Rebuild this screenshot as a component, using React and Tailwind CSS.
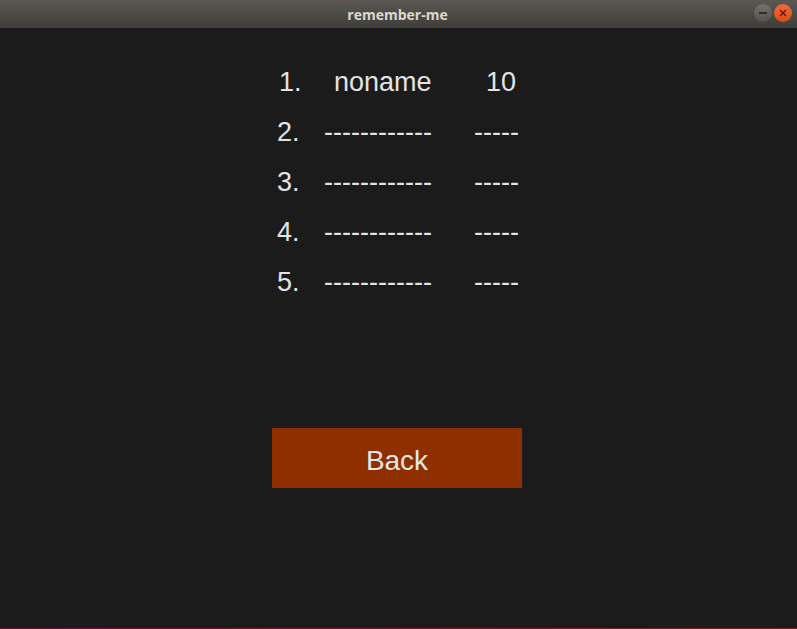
export default function App() {
  const rows = [
    ["1.", "noname", "10"],
    ["2.", "------------", "-----"],
    ["3.", "------------", "-----"],
    ["4.", "------------", "-----"],
    ["5.", "------------", "-----"],
  ];
  return (
    <div className="w-[797px] h-[629px] flex flex-col bg-[#1b1b1b] overflow-hidden">
      <div className="h-[28px] shrink-0 flex items-center justify-center relative bg-gradient-to-b from-[#5b5853] to-[#403e3a]">
        <span className="text-[14px] font-bold text-[#dcd8d0] pr-[2px]" style={{ fontFamily: '"Open Sans", "DejaVu Sans", sans-serif' }}>remember-me</span>
        <div className="absolute right-[5px] top-[4px] flex gap-[2px]">
          <div className="w-[18px] h-[18px] rounded-full bg-gradient-to-b from-[#74726d] to-[#55534f] flex items-center justify-center">
            <div className="w-[8px] h-[1.5px] bg-[#2e2d2b]" />
          </div>
          <div className="w-[18px] h-[18px] rounded-full bg-gradient-to-b from-[#f26a3a] to-[#de4a18] flex items-center justify-center">
            <svg width="8" height="8" viewBox="0 0 8 8"><path d="M1 1L7 7M7 1L1 7" stroke="#5a1a08" strokeWidth="1.4" /></svg>
          </div>
        </div>
      </div>
      <div className="flex-1 flex flex-col items-start pl-[272px] pt-[29px] text-[#e3e3e3]" style={{ fontFamily: '"Liberation Sans", Arial, sans-serif' }}>
        <div className="w-[250px] flex flex-col">
          {rows.map((r, i) => (
            <div key={i} className="h-[50px] flex items-center text-[27px]">
              <span className={i === 0 ? "w-[38px] pl-[7px]" : "w-[38px] pl-[5px]"}>{r[0]}</span>
              <span className={i === 0 ? "w-[144px] pl-[24px]" : "w-[144px] pl-[14px]"}>{r[1]}</span>
              <span className={i === 0 ? "flex-1 text-right pr-[6px]" : "flex-1 text-right pr-[3px]"}>{r[2]}</span>
            </div>
          ))}
        </div>
        <button className="mt-[121px] w-[250px] h-[60px] bg-[#8f2f00] text-[#e6e6e6] text-[28px] pt-[6px] flex items-center justify-center">Back</button>
      </div>
      <div className="h-[1px] shrink-0 bg-gradient-to-r from-[#6e1038] to-[#8a1c1c]" />
    </div>
  );
}
